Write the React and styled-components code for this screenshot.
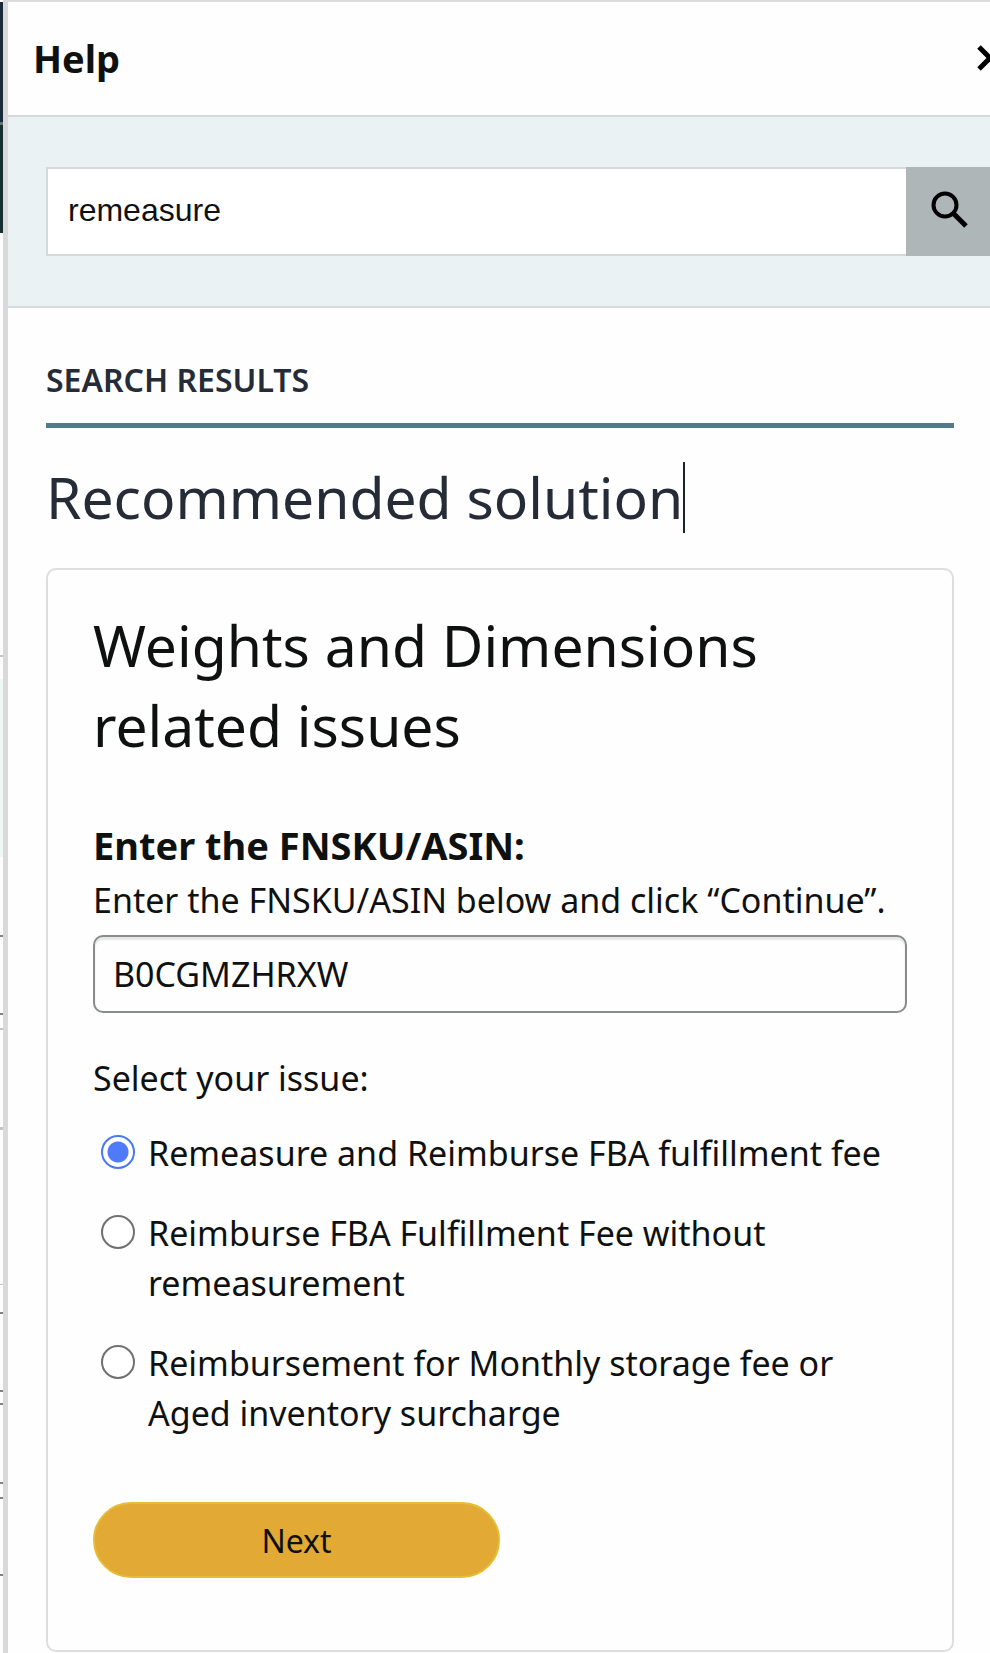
import React, { useState } from "react";
import styled, { createGlobalStyle } from "styled-components";

const GlobalStyle = createGlobalStyle`
  *, *::before, *::after { box-sizing: border-box; }
  body {
    margin: 0;
    background: #fefefe;
    color: #0f1111;
    font-family: "Noto Sans", "Open Sans", sans-serif;
  }
  h1, h2, h3, p, fieldset { margin: 0; padding: 0; border: 0; }
`;

const Page = styled.div`
  display: flex;
  min-height: 100vh;
  overflow: hidden;
`;

const Sliver = styled.div`
  flex: 0 0 3px;
  display: flex;
  flex-direction: column;
  padding-top: 2px;
`;

const Segment = styled.div`
  height: ${(p) => p.$height}px;
  background: ${(p) => p.$color};
`;

const Drawer = styled.aside`
  flex: 1;
  min-width: 0;
  border-left: 5px solid #d9d9da;
  border-top: 2px solid #dcdcdc;
`;

const Header = styled.header`
  display: flex;
  align-items: center;
  justify-content: space-between;
  height: 115px;
  padding: 0 0 2px 25px;
  border-bottom: 2px solid #d5d9db;
`;

const Title = styled.h1`
  font-size: 38px;
  line-height: 52px;
  font-weight: 700;
`;

const CloseButton = styled.button`
  display: flex;
  margin-right: -14px;
  padding: 0;
  border: 0;
  background: none;
  color: #000;
`;

const SearchBar = styled.form`
  display: flex;
  margin-right: -4px;
  padding: 50px 0 50px 38px;
  background: #eaf2f4;
  border-bottom: 2px solid #d8dadb;
`;

const SearchInput = styled.input`
  flex: 1;
  min-width: 0;
  height: 89px;
  padding: 0 20px 2px;
  border: 2px solid #d5d9d9;
  border-right: 0;
  border-radius: 0;
  background: #fff;
  color: #0f1111;
  font: 32px "Liberation Sans", Arial, sans-serif;
  outline: 0;
`;

const SearchButton = styled.button`
  flex: 0 0 88px;
  display: flex;
  align-items: center;
  justify-content: center;
  padding: 0 2px 5px 0;
  border: 0;
  background: #afb6b7;
  color: #000;
`;

const Results = styled.main`
  padding: 46px 36px 0 38px;
`;

const SectionTitle = styled.h2`
  padding: 4px 0 21px;
  border-bottom: 5px solid #527a88;
  color: #252b37;
  font-size: 32px;
  line-height: 44px;
  font-weight: 600;
`;

const SolutionTitle = styled.h2`
  display: flex;
  align-items: center;
  padding: 31px 0 32px;
  color: #252b37;
  font-size: 57px;
  line-height: 77px;
  font-weight: 400;
`;

const Caret = styled.span`
  width: 2px;
  height: 71px;
  background: #1c222b;
`;

const Card = styled.section`
  padding: 35px 45px 72px;
  border: 2px solid #dddfdf;
  border-radius: 10px;
`;

const CardTitle = styled.h3`
  margin-bottom: 52px;
  font-size: 57px;
  line-height: 80px;
  font-weight: 400;
`;

const FieldLabel = styled.label`
  display: block;
  font-size: 38px;
  line-height: 56px;
  font-weight: 700;
`;

const BodyText = styled.p`
  padding-top: 2px;
  font-size: 34px;
  line-height: 50px;
`;

const TextInput = styled.input`
  display: block;
  width: 100%;
  height: 78px;
  margin: 10px 0 40px;
  padding: 0 18px;
  border: 2px solid #888c8c;
  border-radius: 10px;
  background: #fefefe;
  box-shadow: inset 0 3px 2px #e6e6e6;
  color: #0f1111;
  font: inherit;
  font-size: 34px;
  outline: 0;
`;

const Options = styled.fieldset`
  display: flex;
  flex-direction: column;
  gap: 30px;
  min-width: 0;
`;

const Legend = styled.legend`
  margin-bottom: 25px;
  padding: 0;
  font-size: 34px;
  line-height: 50px;
`;

const Option = styled.label`
  display: flex;
  align-items: flex-start;
  gap: 13px;
  padding-left: 8px;
  font-size: 34px;
  line-height: 50px;
`;

const Radio = styled.input`
  appearance: none;
  flex: 0 0 34px;
  height: 34px;
  margin: 7px 0 0;
  border: 2px solid #6f7070;
  border-radius: 50%;
  background: #fff;

  &:checked {
    border-color: #4a78ee;
    background: radial-gradient(circle, #4f7bfa 10px, #fff 11px);
  }
`;

const NextButton = styled.button`
  display: block;
  width: 50%;
  height: 76px;
  margin-top: 64px;
  border: 2px solid #e6bd35;
  border-radius: 38px;
  background: #e2a935;
  color: #0f1111;
  font: inherit;
  font-size: 32px;
`;

const NAVY = "#1b2a38";
const GREEN = "#17302f";
const BLANK = "#fdfdfd";
const LIGHT = "#c4c6c6";
const DARK = "#808383";
const MINT = "#eef9f7";

const segments = [
  [120, NAVY], [3, "#64737a"], [108, GREEN], [422, BLANK],
  [2, LIGHT], [22, BLANK], [178, MINT], [78, BLANK],
  [2, DARK], [76, BLANK], [2, DARK], [13, BLANK], [2, LIGHT],
  [97, BLANK], [3, LIGHT], [154, BLANK], [1, LIGHT], [27, BLANK],
  [2, DARK], [76, BLANK], [2, DARK], [11, BLANK], [2, DARK],
  [77, BLANK], [2, DARK], [13, BLANK], [2, DARK], [75, BLANK], [2, DARK],
];

const issues = [
  "Remeasure and Reimburse FBA fulfillment fee",
  "Reimburse FBA Fulfillment Fee without remeasurement",
  "Reimbursement for Monthly storage fee or Aged inventory surcharge",
];

export default function App() {
  const [query, setQuery] = useState("remeasure");
  const [sku, setSku] = useState("B0CGMZHRXW");
  const [issue, setIssue] = useState(0);

  return (
    <>
      <GlobalStyle />
      <Page>
        <Sliver aria-hidden="true">
          {segments.map(([height, color], i) => (
            <Segment key={i} $height={height} $color={color} />
          ))}
        </Sliver>
        <Drawer>
          <Header>
            <Title>Help</Title>
            <CloseButton type="button" aria-label="Close">
              <svg width="28" height="28" viewBox="0 0 28 28" fill="none" stroke="currentColor" strokeWidth="5">
                <path d="M3 3l22 22M25 3L3 25" />
              </svg>
            </CloseButton>
          </Header>
          <SearchBar onSubmit={(e) => e.preventDefault()}>
            <SearchInput aria-label="Search help" value={query} onChange={(e) => setQuery(e.target.value)} />
            <SearchButton type="submit" aria-label="Search">
              <svg width="38" height="38" viewBox="0 0 38 38" fill="none" stroke="currentColor" strokeWidth="4">
                <circle cx="15" cy="15" r="11.5" />
                <path d="M24 24l12 12" strokeWidth="5" />
              </svg>
            </SearchButton>
          </SearchBar>
          <Results>
            <SectionTitle>SEARCH RESULTS</SectionTitle>
            <SolutionTitle>
              Recommended solution
              <Caret />
            </SolutionTitle>
            <Card>
              <CardTitle>Weights and Dimensions related issues</CardTitle>
              <FieldLabel htmlFor="sku">Enter the FNSKU/ASIN:</FieldLabel>
              <BodyText>Enter the FNSKU/ASIN below and click “Continue”.</BodyText>
              <TextInput id="sku" value={sku} onChange={(e) => setSku(e.target.value)} />
              <Options>
                <Legend>Select your issue:</Legend>
                {issues.map((text, i) => (
                  <Option key={text}>
                    <Radio type="radio" name="issue" checked={issue === i} onChange={() => setIssue(i)} />
                    <span>{text}</span>
                  </Option>
                ))}
              </Options>
              <NextButton type="button">Next</NextButton>
            </Card>
          </Results>
        </Drawer>
      </Page>
    </>
  );
}
